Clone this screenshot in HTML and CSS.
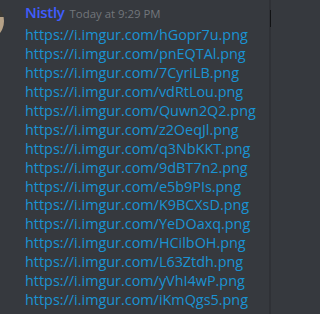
FILE: index.html
```html
<!DOCTYPE html>
<html>
<head>
<meta charset="utf-8">
<link rel="stylesheet" href="styles.css">
</head>
<body>
<div class="chat">
  <div class="message">
    <div class="avatar"><div class="face"></div></div>
    <div class="content">
      <div class="header">
        <span class="name">Nistly</span>
        <span class="time">Today at 9:29 PM</span>
      </div>
      <div class="links">
        <a class="link">https://i.imgur.com/hGopr7u.png</a>
        <a class="link">https://i.imgur.com/pnEQTAl.png</a>
        <a class="link">https://i.imgur.com/7CyriLB.png</a>
        <a class="link">https://i.imgur.com/vdRtLou.png</a>
        <a class="link">https://i.imgur.com/Quwn2Q2.png</a>
        <a class="link">https://i.imgur.com/z2OeqJl.png</a>
        <a class="link">https://i.imgur.com/q3NbKKT.png</a>
        <a class="link">https://i.imgur.com/9dBT7n2.png</a>
        <a class="link">https://i.imgur.com/e5b9PIs.png</a>
        <a class="link">https://i.imgur.com/K9BCXsD.png</a>
        <a class="link">https://i.imgur.com/YeDOaxq.png</a>
        <a class="link">https://i.imgur.com/HCilbOH.png</a>
        <a class="link">https://i.imgur.com/L63Ztdh.png</a>
        <a class="link">https://i.imgur.com/yVhI4wP.png</a>
        <a class="link">https://i.imgur.com/iKmQgs5.png</a>
      </div>
    </div>
  </div>
  <div class="scrollbar"><div class="thumb"></div></div>
</div>
</body>
</html>
```
FILE: styles.css
```css
html, body {
  margin: 0;
  padding: 0;
  background: #36393e;
}
.chat {
  position: relative;
  width: 271px;
  height: 314px;
  overflow: hidden;
  background: #36393e;
}
.message {
  display: flex;
  gap: 21px;
  margin-left: -36px;
}
.avatar {
  flex: none;
  width: 40px;
  height: 40px;
  margin-top: 1px;
  border-radius: 50%;
  background: #3b3a36;
  overflow: hidden;
  display: flex;
  justify-content: flex-end;
}
.face {
  width: 6px;
  height: 16px;
  margin-top: 16px;
  background: #b6a288;
}
.content {
  display: flex;
  flex-direction: column;
  font-family: "Open Sans", sans-serif;
  padding-top: 2px;
}
.header {
  display: flex;
  align-items: baseline;
  gap: 5px;
  height: 24px;
}
.name {
  font-size: 15px;
  font-weight: 600;
  color: #3f5dff;
  letter-spacing: -0.3px;
}
.time {
  font-size: 11.4px;
  color: #72767b;
}
.links {
  display: flex;
  flex-direction: column;
}
.link {
  font-size: 14.4px;
  line-height: 18.93px;
  color: #1a93d3;
}
.scrollbar {
  position: absolute;
  top: 0;
  right: 0;
  width: 2px;
  height: 314px;
  background: #2f3136;
}
.thumb {
  margin-top: 10px;
  margin-left: 1px;
  width: 1px;
  height: 17px;
  background: #111214;
}
```
